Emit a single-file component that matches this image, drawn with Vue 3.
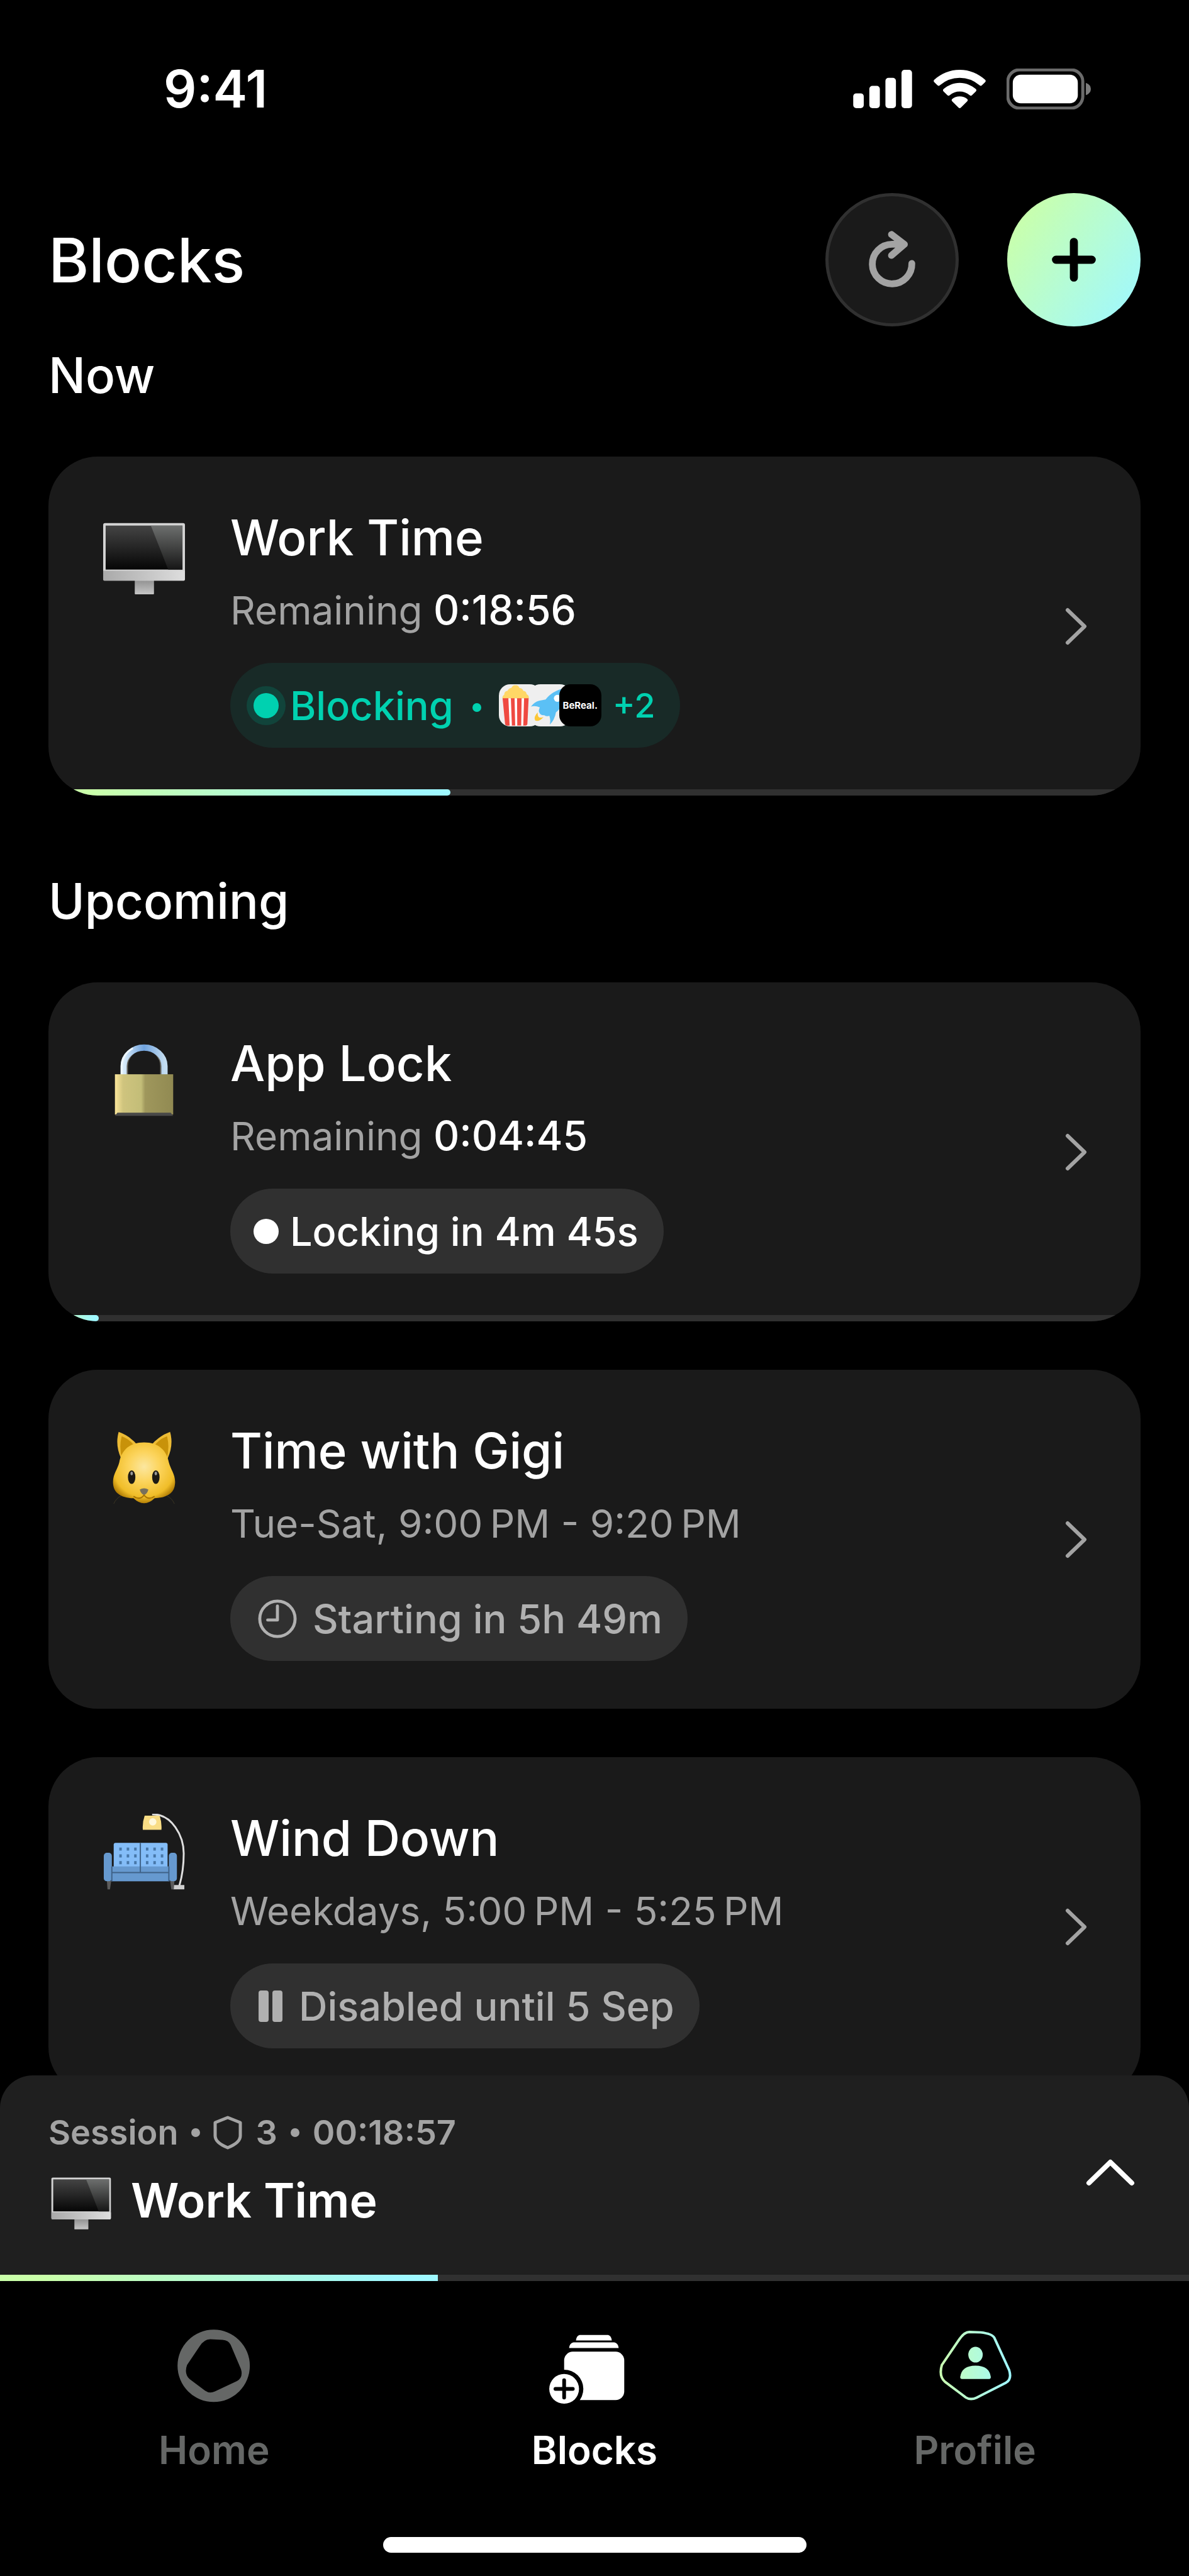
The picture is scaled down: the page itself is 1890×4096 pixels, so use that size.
<template>
  <div class="screen">
    <!-- Status bar -->
    <div class="status">
      <span class="status-time">9:41</span>
      <div class="status-icons">
        <svg class="signal" viewBox="0 0 96 62" aria-hidden="true">
          <rect x="0" y="38" width="17" height="24" rx="5" />
          <rect x="26" y="26" width="17" height="36" rx="5" />
          <rect x="52" y="13" width="17" height="49" rx="5" />
          <rect x="78" y="0" width="17" height="62" rx="5" />
        </svg>
        <svg class="wifi" viewBox="0 0 84 62" aria-hidden="true">
          <path d="M42 0C58 0 72 6 83 16Q85 18 83 20L78 25Q76 27 74 25Q60 13 42 13T10 25Q8 27 6 25L1 20Q-1 18 1 16C12 6 26 0 42 0Z" />
          <path d="M42 21C52 21 61 25 68 31Q70 33 68 35L62 41Q60 43 58 41Q51 35 42 35T26 41Q24 43 22 41L16 35Q14 33 16 31C23 25 32 21 42 21Z" />
          <path d="M42 43Q49 43 54 47Q56 49 54 51L44 61Q42 63 40 61L30 51Q28 49 30 47Q35 43 42 43Z" />
        </svg>
        <svg class="battery" viewBox="0 0 136 66" aria-hidden="true">
          <rect class="battery-frame" x="2" y="2" width="121" height="62" rx="19" />
          <rect x="10" y="10" width="105" height="46" rx="13" />
          <path class="battery-nub" d="M128 23Q136 26 136 33T128 43Z" />
        </svg>
      </div>
    </div>

    <!-- Page header -->
    <header class="header">
      <h1>Blocks</h1>
      <div class="actions">
        <button type="button" class="round round-dark" aria-label="Refresh">
          <svg viewBox="0 0 108 108">
            <path d="M86 60A32 32 0 1 1 54 29H74M53 13L74 29L53 47" />
          </svg>
        </button>
        <button type="button" class="round round-bright" aria-label="Add block">
          <svg viewBox="0 0 108 108"><path d="M54 25V83M25 54H83" /></svg>
        </button>
      </div>
    </header>

    <!-- Block list, runs on below the session bar -->
    <main class="list">
      <section v-for="section in sections" :key="section.title" class="section">
        <h2>{{ section.title }}</h2>
        <div class="cards">
          <a v-for="block in section.blocks" :key="block.title" class="card" href="#">
            <div class="card-body">
              <svg class="emoji" viewBox="0 0 134 134" aria-hidden="true">
                <use :href="`#emoji-${block.emoji}`" />
              </svg>
              <div class="info">
                <h3>{{ block.title }}</h3>
                <p class="detail">
                  {{ block.detail }}
                  <strong v-if="block.time">{{ block.time }}</strong>
                </p>
                <div :class="['pill', `pill-${block.state}`]">
                  <svg v-if="block.state === 'clock'" class="pill-clock" viewBox="0 0 64 64" aria-hidden="true">
                    <circle cx="32" cy="32" r="29" />
                    <path d="M32 11V34H16" />
                  </svg>
                  <svg v-else-if="block.state === 'paused'" class="pill-pause" viewBox="0 0 40 52" aria-hidden="true">
                    <rect x="1" y="1" width="16" height="50" rx="4" />
                    <rect x="23" y="1" width="16" height="50" rx="4" />
                  </svg>
                  <span v-else class="dot"></span>
                  <span>{{ block.status }}</span>
                  <template v-if="block.more">
                    <span class="bullet"></span>
                    <span class="apps">
                      <svg class="app" viewBox="0 0 204 204" aria-hidden="true">
                        <path class="popcorn" d="M18 70Q14 58 26 50Q26 34 42 32Q48 18 60 18Q68 4 80 5Q94 4 100 18Q114 18 118 32Q134 34 134 48Q148 54 144 70Z" />
                        <path class="tub" d="M18 68H144L138 192Q137 200 130 200H40Q31 200 30 192Z" />
                        <path class="stripes" d="M46 68H58L63 200H52ZM76 68H88L89 200H79ZM110 68H122L118 200H108Z" />
                      </svg>
                      <svg class="app" viewBox="0 0 204 204" aria-hidden="true">
                        <path class="rocket" d="M175 18Q110 32 80 74L48 80Q26 86 9 108Q30 102 52 112Q44 130 50 138Q56 152 74 150Q84 158 98 152Q106 176 100 196Q124 172 130 136Q176 100 175 18Z" />
                        <circle class="port" cx="137" cy="68" r="17" />
                        <path class="flame" d="M42 136Q20 158 30 176Q50 182 70 158Q56 164 48 160Q40 152 42 136ZM10 186L24 200H14Z" />
                      </svg>
                      <span class="app app-dark">BeReal.</span>
                    </span>
                    <span class="more">{{ block.more }}</span>
                  </template>
                </div>
              </div>
              <svg class="chevron" viewBox="0 0 36 60" aria-hidden="true"><path d="M4 4L31 30L4 56" /></svg>
            </div>
            <div :class="['track', { 'track-on': block.progress }]">
              <div v-if="block.progress" class="fill" :style="{ width: block.progress + '%' }"></div>
            </div>
          </a>
        </div>
      </section>
    </main>

    <!-- Running session -->
    <aside class="session">
      <div class="session-body">
        <div class="session-info">
          <p class="session-meta">
            <span>Session</span>
            <span class="bullet"></span>
            <svg class="shield" viewBox="0 0 46 54" aria-hidden="true">
              <path d="M23 3L43 11V32Q43 43 23 51Q3 43 3 32V11Z" />
            </svg>
            <span>3</span>
            <span class="bullet"></span>
            <span>00:18:57</span>
          </p>
          <p class="session-title">
            <svg class="session-emoji" viewBox="0 0 134 134" aria-hidden="true"><use href="#emoji-monitor" /></svg>
            Work Time
          </p>
        </div>
        <button type="button" class="expand" aria-label="Expand session">
          <svg viewBox="0 0 96 60"><path d="M14 47L48 14L82 47" /></svg>
        </button>
      </div>
      <div class="track track-on">
        <div class="fill fill-flat" :style="{ width: sessionProgress + '%' }"></div>
      </div>
    </aside>

    <!-- Tab bar -->
    <nav class="tabs">
      <a v-for="tab in tabs" :key="tab.id" href="#" :class="['tab', { 'tab-active': tab.id === active }]">
        <svg viewBox="0 0 134 134" aria-hidden="true"><use :href="`#tab-${tab.id}`" /></svg>
        <span>{{ tab.label }}</span>
      </a>
    </nav>
    <div class="indicator"></div>

    <!-- Shared drawings -->
    <svg class="defs" aria-hidden="true">
      <defs>
        <linearGradient id="screenGrad" x1="0" y1="0" x2="0" y2="1">
          <stop offset="0" stop-color="#444" />
          <stop offset="1" stop-color="#060606" />
        </linearGradient>
        <linearGradient id="glareGrad" x1="0" y1="0" x2="0" y2="1">
          <stop offset="0" stop-color="#6d6f6e" />
          <stop offset="1" stop-color="#161616" />
        </linearGradient>
        <linearGradient id="chinGrad" x1="0" y1="0" x2="1" y2="0">
          <stop offset="0" stop-color="#a9a9a9" />
          <stop offset="1" stop-color="#dedede" />
        </linearGradient>
        <linearGradient id="standGrad" x1="0" y1="0" x2="0" y2="1">
          <stop offset="0" stop-color="#8f8f8f" />
          <stop offset="1" stop-color="#c6c6c6" />
        </linearGradient>
        <linearGradient id="brassGrad" x1="0" y1="0" x2="1" y2="0">
          <stop offset="0" stop-color="#fbe69a" />
          <stop offset="0.14" stop-color="#cfc47e" />
          <stop offset="0.45" stop-color="#c3bd78" />
          <stop offset="0.52" stop-color="#9f975c" />
          <stop offset="1" stop-color="#918a52" />
        </linearGradient>
        <linearGradient id="steelGrad" x1="0" y1="0" x2="1" y2="0">
          <stop offset="0" stop-color="#d9ecfa" />
          <stop offset="0.5" stop-color="#6fa2dd" />
          <stop offset="1" stop-color="#c3dcf0" />
        </linearGradient>
        <radialGradient id="catGrad" cx="0.5" cy="0.4" r="0.62">
          <stop offset="0" stop-color="#fbe7a0" />
          <stop offset="0.4" stop-color="#fcd45c" />
          <stop offset="0.8" stop-color="#f0bd28" />
          <stop offset="1" stop-color="#a87400" />
        </radialGradient>
        <linearGradient id="tabGrad" gradientUnits="userSpaceOnUse" x1="70" y1="0" x2="420" y2="0">
          <stop offset="0" stop-color="#caffb0" />
          <stop offset="1" stop-color="#9ff8ff" />
        </linearGradient>

        <g id="emoji-monitor">
          <rect x="52" y="107" width="31" height="24" rx="1" fill="url(#standGrad)" />
          <rect x="1" y="16" width="132" height="93" rx="3" fill="#d4d4d4" />
          <path d="M1 93H133V106Q133 109 130 109H4Q1 109 1 106Z" fill="url(#chinGrad)" />
          <rect x="5" y="20" width="124" height="71" fill="url(#screenGrad)" />
          <path d="M78 20H129V91H106Z" fill="url(#glareGrad)" />
        </g>

        <g id="emoji-lock">
          <path d="M37 60V44a30 30 0 0 1 60 0V60" fill="none" stroke="#6c6a62" stroke-width="8" />
          <path d="M34 60V44a33 30 0 0 1 66 0V60" fill="none" stroke="url(#steelGrad)" stroke-width="10" />
          <path d="M31 60V44a36 33 0 0 1 18 -29" fill="none" stroke="#eef7fd" stroke-width="3" />
          <rect x="20" y="57" width="94" height="65" fill="url(#brassGrad)" />
          <path d="M20 124L24 119H110L114 124Z" fill="#484848" />
        </g>

        <g id="emoji-cat">
          <path d="M26 9Q45 16 57 31L30 52Q20 30 26 9ZM109 9Q90 16 78 31L105 52Q115 30 109 9Z" fill="#ecbb35" />
          <path d="M31 16Q45 21 54 35L32 54Q26 34 31 16ZM104 16Q90 21 81 35L103 54Q109 34 104 16Z" fill="#c8920a" />
          <path d="M67 26C90 26 103 38 107 58C110 70 118 78 117 92C116 108 104 115 84 116Q76 124 67 124T50 116C30 115 18 108 17 92C16 78 24 70 27 58C31 38 44 26 67 26Z" fill="url(#catGrad)" />
          <ellipse cx="47" cy="82" rx="6" ry="11" fill="#1d1a14" />
          <ellipse cx="86" cy="82" rx="6" ry="11" fill="#1d1a14" />
          <ellipse cx="47" cy="76" rx="2" ry="3" fill="#9a9a9a" />
          <ellipse cx="86" cy="76" rx="2" ry="3" fill="#9a9a9a" />
          <path d="M60 102Q67 98 74 102Q72 109 67 111Q62 109 60 102Z" fill="#77705c" />
          <path d="M50 113Q60 120 67 111Q74 120 84 113" fill="none" stroke="#a87400" stroke-width="2" />
          <path d="M30 112Q22 116 18 125M104 112Q112 116 116 125" fill="none" stroke="#3a3524" stroke-width="1" />
        </g>

        <g id="emoji-couch">
          <path d="M80 1C112 0 131 36 131 64Q131 92 124 116" fill="none" stroke="#dedede" stroke-width="3" />
          <rect x="114" y="115" width="18" height="7" fill="#cfcfcf" />
          <path d="M68 3H92Q96 14 95 26H65Q64 14 68 3Z" fill="#f9dd85" />
          <circle cx="81" cy="13" r="6" fill="#fff8dc" />
          <path d="M7 108H14L12 122H8ZM109 108H116L115 122H111Z" fill="#5b5b5b" />
          <rect x="18" y="47" width="87" height="42" rx="3" fill="#84bdf8" />
          <path d="M27 57H56M27 68H56M27 79H56M70 57H99M70 68H99M70 79H99" fill="none" stroke="#4777a8" stroke-width="5" stroke-dasharray="4 8" />
          <rect x="14" y="85" width="94" height="24" fill="#6699cf" />
          <rect x="2" y="63" width="13" height="46" rx="5" fill="#6699cf" />
          <rect x="107" y="63" width="13" height="46" rx="5" fill="#6699cf" />
          <path d="M15 95H107M61 47V95M15 85V109M107 85V109" fill="none" stroke="#3f6288" stroke-width="2" />
        </g>

        <g id="tab-home">
          <path
            transform="translate(-14 -14.5) scale(0.3333)"
            fill="#656766"
            fill-rule="evenodd"
            d="M242 69A175 175 0 1 1 242 419A175 175 0 1 1 242 69ZM225 115L285 118Q314 120 324 142L374 260Q386 300 355 318L248 368Q222 380 200 364L125 308Q98 282 113 240L175 148Q195 116 225 115Z"
          />
        </g>

        <g id="tab-blocks">
          <path d="M43 17H89Q94 18 95 26H37Q38 18 43 17ZM33 29H99Q105 30 106 38H26Q27 30 33 29Z" fill="#fff" />
          <rect x="18" y="44" width="97" height="78" rx="14" fill="#fff" />
          <circle cx="18" cy="104" r="31" fill="#000" />
          <circle cx="18" cy="104" r="24" fill="#fff" />
          <path d="M18 90V118M4 104H32" fill="none" stroke="#000" stroke-width="6" stroke-linecap="round" />
        </g>

        <g id="tab-profile" transform="translate(-14 -14.5) scale(0.3333)">
          <path
            d="M215 80L270 82Q325 88 336 108L408 265Q422 310 392 326L250 398Q222 412 198 397L98 322Q66 295 82 240L165 118Q190 80 215 80Z"
            fill="none"
            stroke="url(#tabGrad)"
            stroke-width="12"
          />
          <ellipse cx="245" cy="190" rx="35" ry="38" fill="url(#tabGrad)" />
          <path d="M171 298Q178 243 245 243T319 298Q319 308 311 308H179Q171 308 171 298Z" fill="url(#tabGrad)" />
        </g>
      </defs>
    </svg>
  </div>
</template>

<script setup>
import { ref } from 'vue'

const sections = [
  {
    title: 'Now',
    blocks: [
      { title: 'Work Time', emoji: 'monitor', detail: 'Remaining', time: '0:18:56', state: 'blocking', status: 'Blocking', more: '+2', progress: 36.8 },
    ],
  },
  {
    title: 'Upcoming',
    blocks: [
      { title: 'App Lock', emoji: 'lock', detail: 'Remaining', time: '0:04:45', state: 'locking', status: 'Locking in 4m 45s', progress: 4.6 },
      { title: 'Time with Gigi', emoji: 'cat', detail: 'Tue-Sat, 9:00\u202fPM - 9:20\u202fPM', state: 'clock', status: 'Starting in 5h 49m' },
      { title: 'Wind Down', emoji: 'couch', detail: 'Weekdays, 5:00\u202fPM - 5:25\u202fPM', state: 'paused', status: 'Disabled until 5 Sep' },
    ],
  },
]

const tabs = [
  { id: 'home', label: 'Home' },
  { id: 'blocks', label: 'Blocks' },
  { id: 'profile', label: 'Profile' },
]

const active = ref('blocks')
const sessionProgress = ref(36.8)
</script>

<style>
body {
  background: #000;
}
</style>

<style scoped>
.screen {
  display: flex;
  flex-direction: column;
  height: 100vh;
  overflow: hidden;
  background: #000;
  color: #fff;
  font-family: Inter, "Liberation Sans", sans-serif;
}

h1, h2, h3, p {
  margin: 0;
  font-weight: 500;
}

a {
  color: inherit;
  text-decoration: none;
}

button {
  padding: 0;
  border: 0;
  background: none;
}

svg {
  display: block;
  flex: none;
}

.defs {
  position: absolute;
  width: 0;
  height: 0;
}

/* ── Status bar ───────────────────────────────────────────────────────────── */
.status {
  display: flex;
  flex: none;
  align-items: center;
  justify-content: space-between;
  height: 282px;
  padding: 0 156px 0 260px;
}

.status-time {
  font-size: 82px;
  font-weight: 600;
}

.status-icons {
  display: flex;
  align-items: center;
  gap: 33px;
  fill: #fff;
}

.signal  { width: 95px; height: 61px; }
.wifi    { width: 83px; height: 61px; }
.battery { width: 134px; height: 65px; }

.battery-frame {
  fill: none;
  stroke: #6b6b6b;
  stroke-width: 5;
}

.battery-nub { fill: #7d7d7d; }

/* ── Header ───────────────────────────────────────────────────────────────── */
.header {
  display: flex;
  flex: none;
  align-items: center;
  justify-content: space-between;
  padding: 25px 77px 0;
}

h1 { font-size: 98px; }

.actions {
  display: flex;
  gap: 77px;
}

.round {
  display: grid;
  place-items: center;
  width: 212px;
  height: 212px;
  border-radius: 50%;
}

.round svg {
  width: 106px;
  height: 106px;
  fill: none;
  stroke-linecap: round;
  stroke-linejoin: round;
}

.round-dark {
  border: 5px solid #303030;
  background: #1a1a1a;
  stroke: #a3a3a3;
  stroke-width: 11;
}

.round-bright {
  background: linear-gradient(125deg, #caffa9 10%, #b4fcd8 55%, #9ff8ff 95%);
  stroke: #000;
  stroke-width: 13;
}

/* ── Cards ────────────────────────────────────────────────────────────────── */
.list {
  flex: 1;
  min-height: 0;
  overflow: hidden;
  padding: 30px 77px 0;
}

.section + .section { margin-top: 120px; }

h2 {
  font-size: 78px;
  line-height: 96px;
}

.cards {
  display: flex;
  flex-direction: column;
  gap: 77px;
  margin-top: 81px;
}

.card {
  display: block;
  overflow: hidden;
  border-radius: 78px;
  background: #1a1a1a;
}

.card-body {
  display: flex;
  padding: 76px 84px 66px 86px;
}

.emoji {
  width: 132px;
  height: 132px;
  margin: 14px 71px 0 0;
}

.info { flex: 1; }

h3 {
  font-size: 78px;
  line-height: 106px;
}

.detail {
  margin: 27px 0 47px;
  color: #a3a3a3;
  font-size: 62px;
  font-weight: 400;
  line-height: 72px;
}

.detail strong {
  color: #fff;
  font-size: 64px;
  font-weight: 500;
  line-height: 1;
}

.chevron {
  align-self: center;
  width: 36px;
  height: 60px;
  fill: none;
  stroke: #a3a3a3;
  stroke-width: 6;
  stroke-linecap: round;
  stroke-linejoin: round;
}

.track { height: 10px; }
.track-on { background: #303030; }

.fill {
  height: 10px;
  border-radius: 0 5px 5px 0;
  background: linear-gradient(90deg, #caffa9 10%, #9ff8ff 90%);
}

.fill-flat { border-radius: 0; }

/* ── Status pills ─────────────────────────────────────────────────────────── */
.pill {
  display: flex;
  align-items: center;
  width: max-content;
  height: 135px;
  padding: 0 40px 0 44px;
  gap: 25px;
  border-radius: 68px;
  background: #303030;
  font-size: 63px;
  font-weight: 500;
  line-height: 72px;
}

.pill-blocking,
.pill-locking {
  padding-left: 37px;
  gap: 18px;
}

.pill-blocking {
  background: #182a27;
  color: #00d1b0;
}

.pill-clock,
.pill-paused { color: #b0b0b0; }

.dot {
  width: 40px;
  height: 40px;
  border-radius: 50%;
  background: currentColor;
}

.pill-blocking .dot { box-shadow: 0 0 0 11px #11443b; }

svg.pill-clock {
  width: 62px;
  height: 62px;
  fill: none;
  stroke: #b0b0b0;
  stroke-width: 5;
  stroke-linecap: round;
  stroke-linejoin: round;
}

.pill-pause {
  width: 40px;
  height: 52px;
  fill: #b0b0b0;
}

.bullet {
  width: 14px;
  height: 14px;
  border-radius: 50%;
  background: currentColor;
}

.pill .bullet { margin: 6px 10px 0 12px; }

.apps { display: flex; }

.app {
  width: 67px;
  height: 67px;
  border-radius: 18px;
  background: #efefef;
}

.app + .app { margin-left: -19px; }

.app-dark {
  background: #000;
  color: #fff;
  font-size: 15px;
  font-weight: 700;
  line-height: 67px;
  text-align: center;
}

.popcorn { fill: #ffd766; }
.tub     { fill: #ef4a41; }
.stripes { fill: #fff; }
.rocket  { fill: #5bc0f5; }
.port    { fill: #fff; }
.flame   { fill: #fcc735; }

.more { font-size: 54px; }

/* ── Session bar ──────────────────────────────────────────────────────────── */
.session {
  flex: none;
  overflow: hidden;
  border-radius: 52px 52px 0 0;
  background: #1f1f1f;
}

.session-body {
  display: flex;
  align-items: center;
  justify-content: space-between;
  padding: 61px 77px 70px;
}

.session-meta {
  display: flex;
  align-items: center;
  gap: 21px;
  color: #a3a3a3;
  font-size: 54px;
  font-weight: 600;
  line-height: 60px;
}

.shield {
  width: 46px;
  height: 54px;
  fill: none;
  stroke: #a3a3a3;
  stroke-width: 5;
  stroke-linejoin: round;
}

.session-title {
  display: flex;
  align-items: center;
  gap: 27px;
  margin-top: 30px;
  font-size: 75px;
  font-weight: 600;
  line-height: 96px;
}

.session-emoji {
  width: 104px;
  height: 96px;
}

.expand svg {
  width: 96px;
  height: 60px;
  fill: none;
  stroke: #fff;
  stroke-width: 8;
  stroke-linecap: round;
  stroke-linejoin: round;
}

/* ── Tab bar ──────────────────────────────────────────────────────────────── */
.tabs {
  display: grid;
  flex: none;
  grid-template-columns: repeat(3, 1fr);
  padding: 69px 38px 102px;
}

.tab {
  display: flex;
  flex-direction: column;
  align-items: center;
  gap: 32px;
  color: #656766;
  font-size: 62px;
  font-weight: 600;
  line-height: 72px;
}

.tab-active { color: #fff; }

.tab svg {
  width: 132px;
  height: 132px;
  overflow: visible;
}

.indicator {
  flex: none;
  align-self: center;
  width: 673px;
  height: 25px;
  margin-bottom: 37px;
  border-radius: 13px;
  background: #fff;
}
</style>
